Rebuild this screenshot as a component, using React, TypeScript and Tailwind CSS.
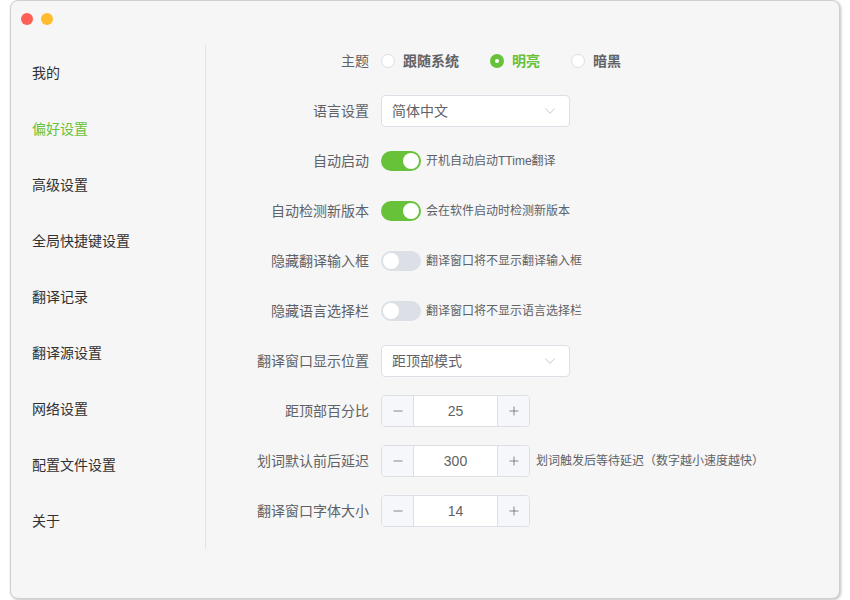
import React from "react";
import { ChevronDown, Minus, Plus } from "lucide-react";

const font = "font-['Helvetica_Neue','Liberation_Sans','Noto_Sans_CJK_SC',sans-serif]";

const navItems = [
  "我的",
  "偏好设置",
  "高级设置",
  "全局快捷键设置",
  "翻译记录",
  "翻译源设置",
  "网络设置",
  "配置文件设置",
  "关于",
];

const Row: React.FC<{ label: string; children: React.ReactNode }> = ({ label, children }) => (
  <div className="flex items-center h-[50px]">
    <div className="w-[150px] text-right text-[14px] text-[#606266] shrink-0">{label}</div>
    <div className="ml-[12px] flex items-center">{children}</div>
  </div>
);

const Radio: React.FC<{ label: string; checked?: boolean }> = ({ label, checked }) => (
  <div className="flex items-center mr-[31px]">
    {checked ? (
      <span className="w-[14px] h-[14px] rounded-full bg-[#67c23a] flex items-center justify-center">
        <span className="w-[4px] h-[4px] rounded-full bg-white" />
      </span>
    ) : (
      <span className="w-[14px] h-[14px] rounded-full bg-white border border-[#dcdfe6]" />
    )}
    <span className={`ml-[8px] text-[14px] font-semibold ${checked ? "text-[#67c23a]" : "text-[#606266]"}`}>
      {label}
    </span>
  </div>
);

const Select: React.FC<{ value: string }> = ({ value }) => (
  <div className="w-[189px] h-[32px] bg-white border border-[#dcdfe6] rounded-[4px] flex items-center justify-between pl-[10px] pr-[10px]">
    <span className="text-[14px] text-[#606266]">{value}</span>
    <ChevronDown size={18} strokeWidth={1.1} className="text-[#b8bcc4]" />
  </div>
);

const Toggle: React.FC<{ on?: boolean; desc: string }> = ({ on, desc }) => (
  <div className="flex items-center">
    <span
      className={`w-[40px] h-[20px] rounded-full flex items-center px-[2px] ${
        on ? "bg-[#67c23a] justify-end" : "bg-[#dcdfe6] justify-start"
      }`}
    >
      <span className="w-[16px] h-[16px] rounded-full bg-white" />
    </span>
    <span className="ml-[5px] text-[12px] text-[#606266]">{desc}</span>
  </div>
);

const NumberInput: React.FC<{ value: number; desc?: string }> = ({ value, desc }) => (
  <div className="flex items-center">
    <div className="w-[149px] h-[32px] flex border border-[#dcdfe6] rounded-[4px] bg-white overflow-hidden">
      <span className="w-[32px] bg-[#f5f7fa] border-r border-[#dcdfe6] flex items-center justify-center text-[#606266]">
        <Minus size={14} strokeWidth={1.3} />
      </span>
      <span className="flex-1 flex items-center justify-center text-[14px] text-[#606266]">{value}</span>
      <span className="w-[32px] bg-[#f5f7fa] border-l border-[#dcdfe6] flex items-center justify-center text-[#606266]">
        <Plus size={14} strokeWidth={1.3} />
      </span>
    </div>
    {desc && <span className="ml-[6px] text-[12px] text-[#606266]">{desc}</span>}
  </div>
);

export default function App() {
  return (
    <div className={`w-[850px] h-[600px] bg-white ${font}`}>
      <div className="ml-[10px] w-[830px] h-[599px] bg-[#f6f6f6] border border-[#cfcfcf] rounded-[8px] shadow-[1px_1px_3px_rgba(0,0,0,0.25)] flex flex-col">
        <div className="h-[35px] flex items-center pl-[10px] gap-[8px] shrink-0">
          <span className="w-[12px] h-[12px] rounded-full bg-[#fe5f57]" />
          <span className="w-[12px] h-[12px] rounded-full bg-[#febc2e]" />
        </div>
        <div className="flex">
          <div className="w-[195px] mt-[9px] border-r border-[#e2e2e2] shrink-0">
            {navItems.map((item) => (
              <div
                key={item}
                className={`h-[56px] flex items-center pl-[21px] text-[14px] ${
                  item === "偏好设置" ? "text-[#67c23a]" : "text-[#303133]"
                }`}
              >
                {item}
              </div>
            ))}
          </div>
          <div className="pl-[13px]">
            <Row label="主题">
              <Radio label="跟随系统" />
              <Radio label="明亮" checked />
              <Radio label="暗黑" />
            </Row>
            <Row label="语言设置">
              <Select value="简体中文" />
            </Row>
            <Row label="自动启动">
              <Toggle on desc="开机自动启动TTime翻译" />
            </Row>
            <Row label="自动检测新版本">
              <Toggle on desc="会在软件启动时检测新版本" />
            </Row>
            <Row label="隐藏翻译输入框">
              <Toggle desc="翻译窗口将不显示翻译输入框" />
            </Row>
            <Row label="隐藏语言选择栏">
              <Toggle desc="翻译窗口将不显示语言选择栏" />
            </Row>
            <Row label="翻译窗口显示位置">
              <Select value="距顶部模式" />
            </Row>
            <Row label="距顶部百分比">
              <NumberInput value={25} />
            </Row>
            <Row label="划词默认前后延迟">
              <NumberInput value={300} desc="划词触发后等待延迟（数字越小速度越快）" />
            </Row>
            <Row label="翻译窗口字体大小">
              <NumberInput value={14} />
            </Row>
          </div>
        </div>
      </div>
    </div>
  );
}
